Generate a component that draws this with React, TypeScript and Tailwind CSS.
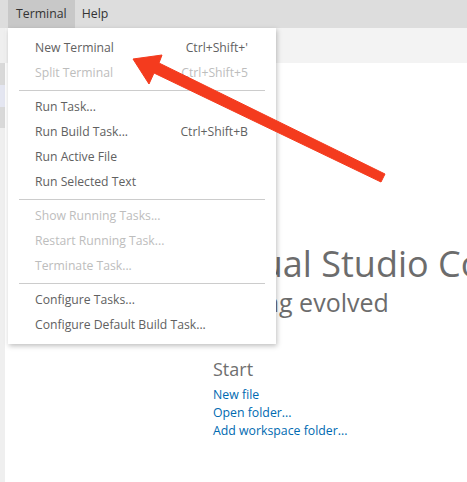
import React from "react";

type Item = { label: string; shortcut?: string; disabled?: boolean } | "sep";

const items: Item[] = [
  { label: "New Terminal", shortcut: "Ctrl+Shift+'" },
  { label: "Split Terminal", shortcut: "Ctrl+Shift+5", disabled: true },
  "sep",
  { label: "Run Task..." },
  { label: "Run Build Task...", shortcut: "Ctrl+Shift+B" },
  { label: "Run Active File" },
  { label: "Run Selected Text" },
  "sep",
  { label: "Show Running Tasks...", disabled: true },
  { label: "Restart Running Task...", disabled: true },
  { label: "Terminate Task...", disabled: true },
  "sep",
  { label: "Configure Tasks..." },
  { label: "Configure Default Build Task..." },
];

export default function App() {
  const font = { fontFamily: '"Open Sans", "Noto Sans", sans-serif' };
  return (
    <div
      className="relative w-[467px] h-[482px] overflow-hidden bg-white flex flex-col"
      style={font}
    >
      {/* menu bar */}
      <div className="h-[28px] bg-[#dddddd] flex items-stretch pl-[8px] text-[12.3px] text-[#333333]">
        <div className="px-[8px] bg-[#c8c8c8] flex items-center">Terminal</div>
        <div className="px-[7px] flex items-center">Help</div>
      </div>
      <div className="flex-1 flex min-h-0">
        <div className="w-[5px] bg-[#efefef] flex flex-col">
          <div className="h-[35px]" />
          <div className="h-[22px] bg-[#d9d9d9]" />
          <div className="h-[22px] bg-[#e4e6f1]" />
          <div className="h-[21px] bg-[#d9d9d9]" />
        </div>
        <div className="flex-1 flex flex-col min-w-0">
          <div className="h-[35px] bg-[#f3f3f3]" />
          <div className="flex-1 overflow-hidden pl-[208px] whitespace-nowrap">
            <div className="pt-[179px] text-[36px] leading-[44px] text-[#6c6c6c]">
              Visual Studio Code
            </div>
            <div className="text-[25px] leading-[32px] text-[#6c6c6c]">
              Editing evolved
            </div>
            <div className="mt-[39px] text-[18px] leading-[24px] text-[#6f6f6f]">Start</div>
            <div className="mt-[5px] flex flex-col text-[12.3px] leading-[18px] text-[#006ab1]">
              <span>New file</span>
              <span>Open folder...</span>
              <span>Add workspace folder...</span>
            </div>
          </div>
        </div>
      </div>

      {/* dropdown menu */}
      <div className="absolute left-[8px] top-[28px] w-[268px] bg-white pt-[8px] pb-[6px] shadow-[1px_2px_5px_rgba(0,0,0,0.25)] text-[12.2px]">
        {items.map((it, i) =>
          it === "sep" ? (
            <div key={i} className="h-[9px] flex items-center px-[11px]">
              <div className="h-px w-full bg-[#cccccc]" />
            </div>
          ) : (
            <div
              key={i}
              className={`h-[25px] flex items-center justify-between pl-[27px] pr-[28px] ${
                it.disabled ? "text-[#bdbdbd]" : "text-[#616161]"
              }`}
            >
              <span>{it.label}</span>
              {it.shortcut && <span>{it.shortcut}</span>}
            </div>
          )
        )}
      </div>

      {/* red arrow */}
      <svg
        className="absolute left-0 top-0 pointer-events-none"
        width="467"
        height="482"
        viewBox="0 0 467 482"
      >
        <polygon
          points="133,59 162,55 159,63 385,174 381,182 154,73 149,84"
          fill="#f43b1e"
          stroke="#f43b1e"
          strokeWidth="1"
          strokeLinejoin="round"
        />
      </svg>
    </div>
  );
}
